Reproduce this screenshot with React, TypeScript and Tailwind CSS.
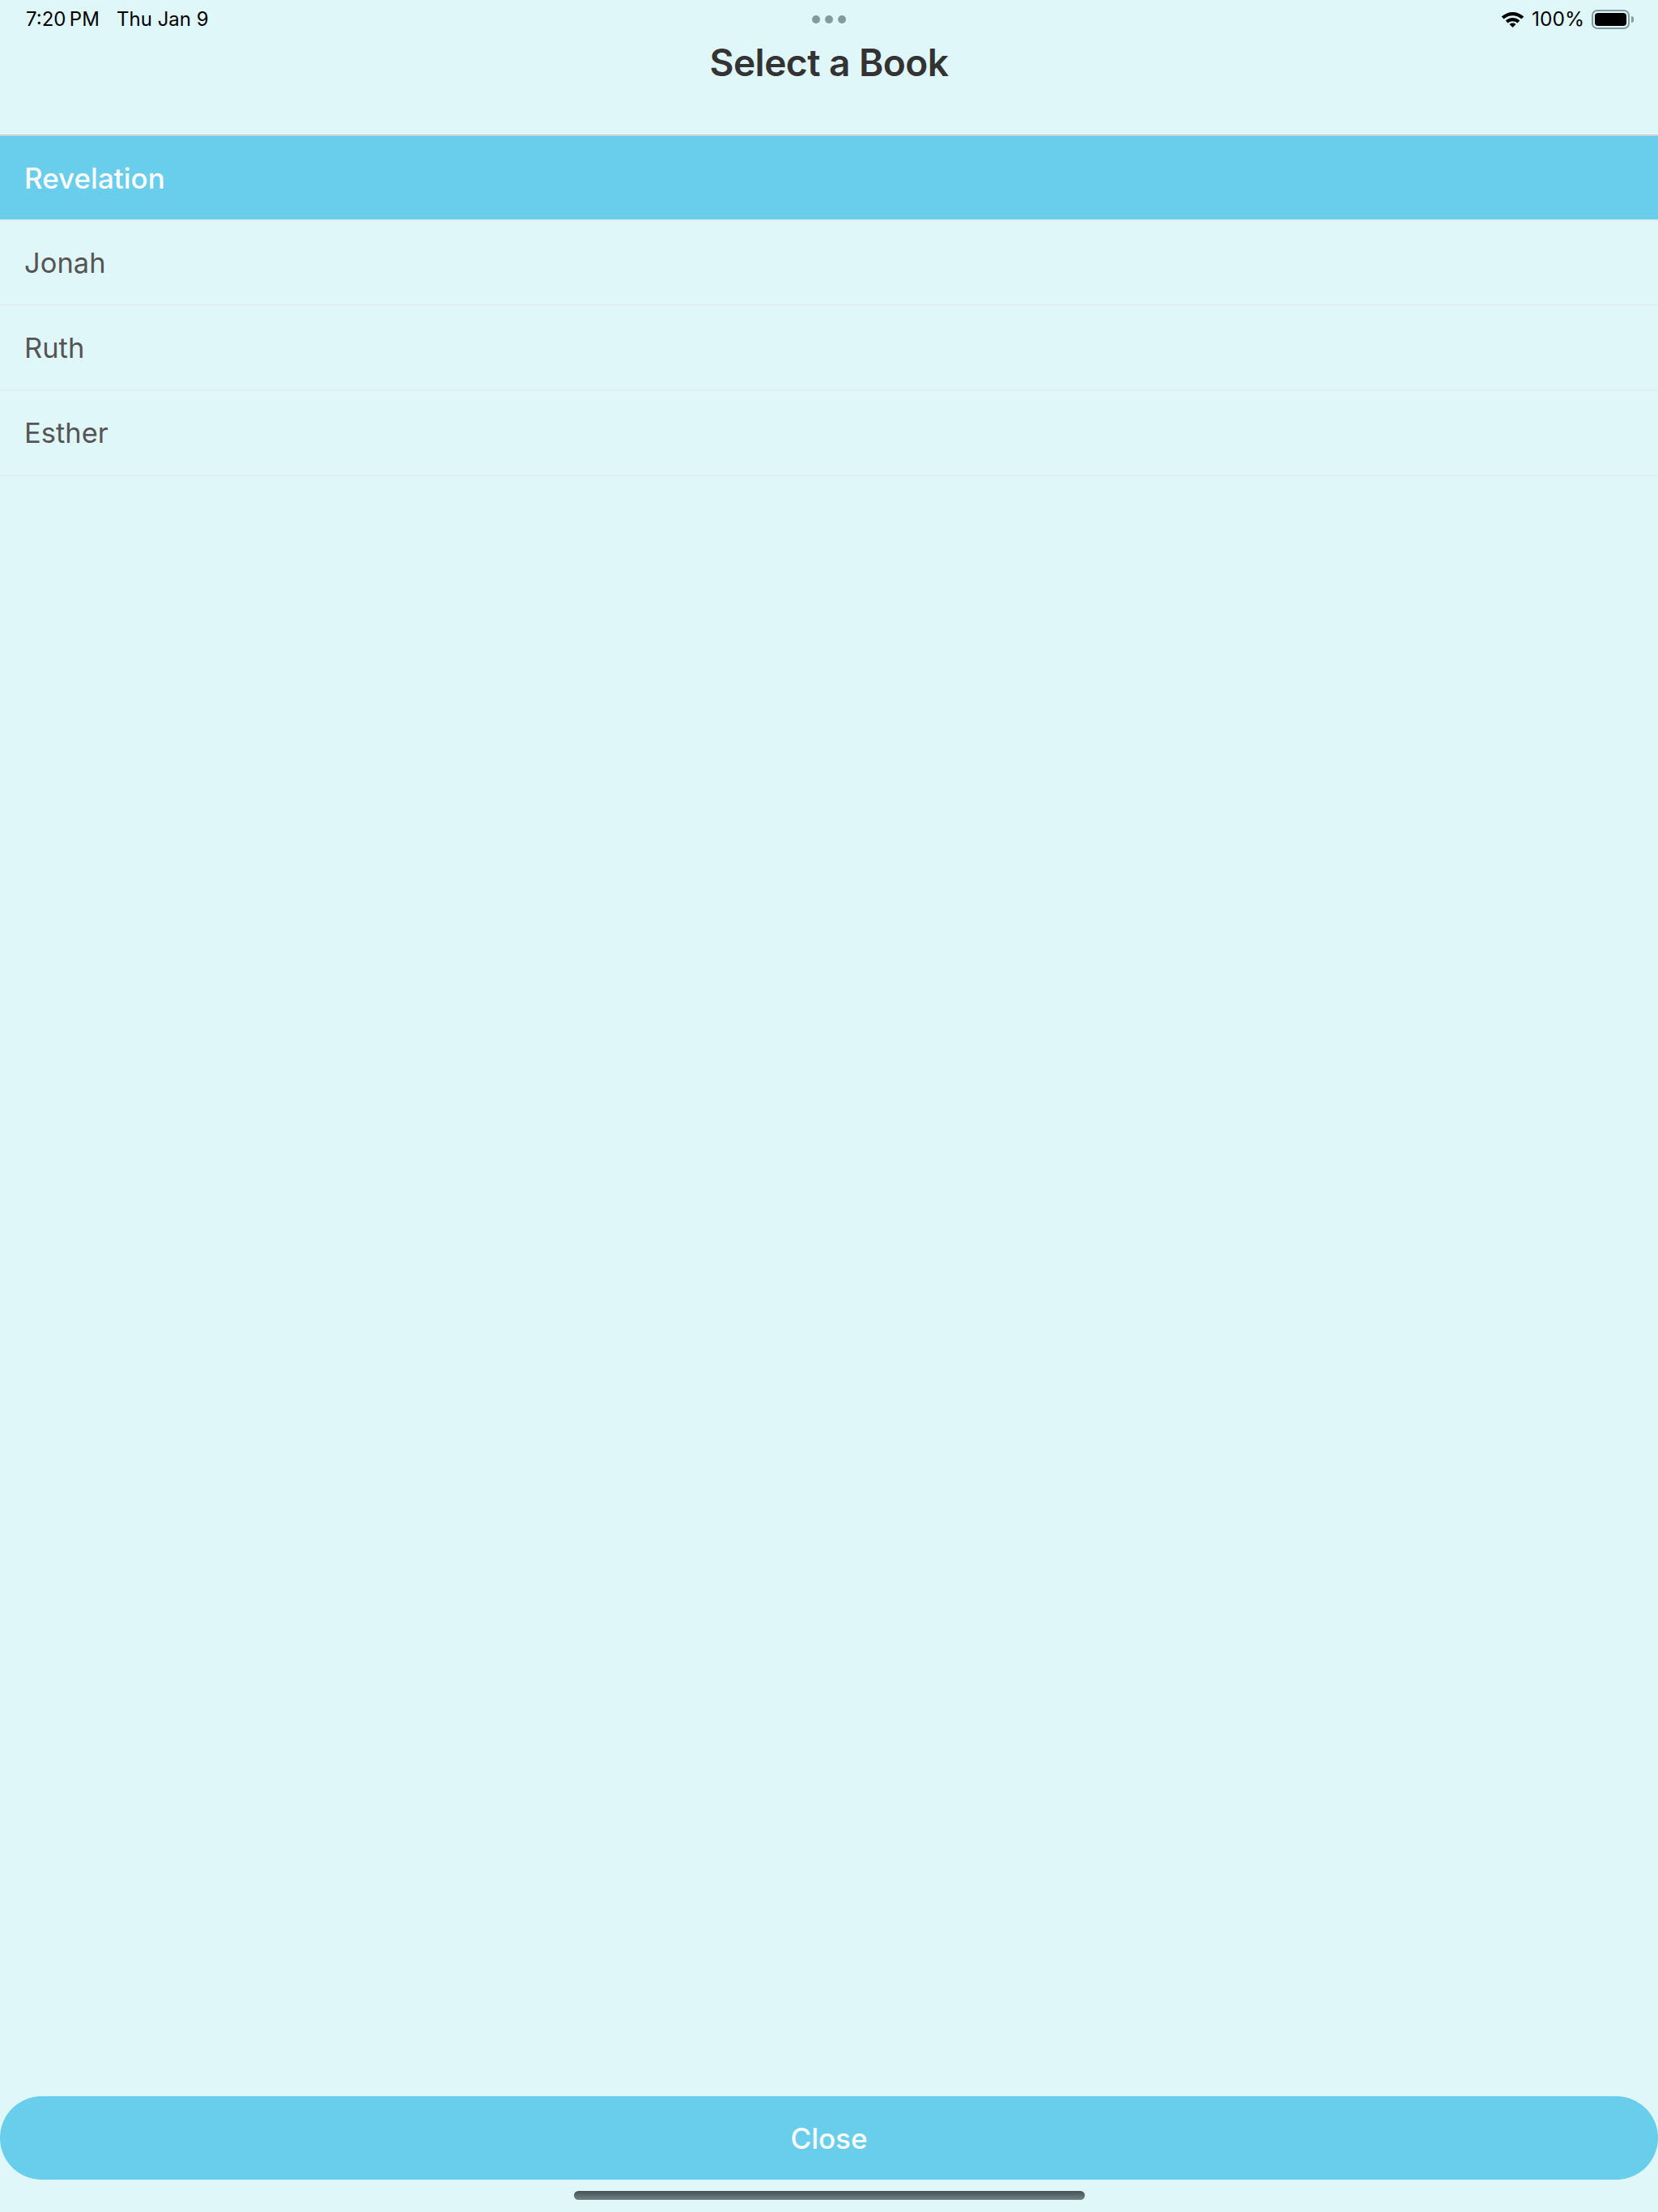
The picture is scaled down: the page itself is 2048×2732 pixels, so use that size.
import React from 'react'

const books = ['Jonah', 'Ruth', 'Esther']

function StatusBar() {
  return (
    <div className="flex items-start justify-between h-[50px] pl-[32px] pr-[30px] pt-[9px] text-black text-[24px] leading-[29px] relative">
      <div className="flex">
        <span className="w-[112px] whitespace-nowrap">7:20{'\u2009'}PM</span>
        <span className="whitespace-nowrap">Thu Jan 9</span>
      </div>
      {/* multitasking dots */}
      <div className="absolute left-[1003px] top-[19px] flex gap-[6px]">
        <div className="w-[10px] h-[10px] rounded-full bg-[#829b9f]" />
        <div className="w-[10px] h-[10px] rounded-full bg-[#829b9f]" />
        <div className="w-[10px] h-[10px] rounded-full bg-[#829b9f]" />
      </div>
      <div className="flex items-center gap-[9px]">
        <svg width="29" height="20" viewBox="0 0 28 20" className="mt-[1px]">
          <path d="M0.2 6.6C8 -0.9 20 -0.9 27.8 6.6L24.9 9.6C18.6 3.8 9.4 3.8 3.1 9.6Z" fill="#000" />
          <path d="M5.2 11.5C10.4 6.9 17.6 6.9 22.8 11.5L19.9 14.5C16.4 11.4 11.6 11.4 8.1 14.5Z" fill="#000" />
          <path d="M10 16C12.4 14.1 15.6 14.1 18 16L14 20Z" fill="#000" />
        </svg>
        <span className="text-[24.5px]">100%</span>
        <div className="flex items-center">
          <div className="w-[47px] h-[24px] rounded-[7px] border-2 border-[#829b9f] p-[2px]">
            <div className="w-full h-full rounded-[4px] bg-black" />
          </div>
          <div className="w-[3px] h-[8px] rounded-r-full bg-[#829b9f] ml-[2px]" />
        </div>
      </div>
    </div>
  )
}

export default function App() {
  return (
    <div className="flex flex-col h-[2732px] w-[2048px] bg-[#e0f7fa] font-['Inter',sans-serif] overflow-hidden">
      <header className="h-[168px] shrink-0 border-b-2 border-[#cbd3d5]">
        <StatusBar />
        <h1 className="text-center text-[46px] leading-[56px] tracking-[-0.5px] font-semibold text-[#333333] -mt-[1px]">Select a Book</h1>
      </header>

      <div className="flex items-center h-[105px] shrink-0 pl-[30px] pt-[1px] bg-[#69cdec] border-b-2 border-[#e3eef1] text-white text-[35px] font-medium">
        Revelation
      </div>
      {books.map(b => (
        <div key={b} className="flex items-center h-[105px] shrink-0 pl-[30px] pt-[1px] border-b-2 border-[#e3eef1] text-[#555555] text-[34.5px]">
          {b}
        </div>
      ))}

      <div className="flex-1" />

      <button className="h-[103px] shrink-0 pt-[1px] rounded-[52px] bg-[#69cdec] text-white text-[35px] font-medium">
        Close
      </button>
      <div className="flex justify-center h-[40px] shrink-0 pt-[14px]">
        <div className="w-[631px] h-[11px] rounded-full bg-gradient-to-b from-[#475154] to-[#6f8487]" />
      </div>
    </div>
  )
}
